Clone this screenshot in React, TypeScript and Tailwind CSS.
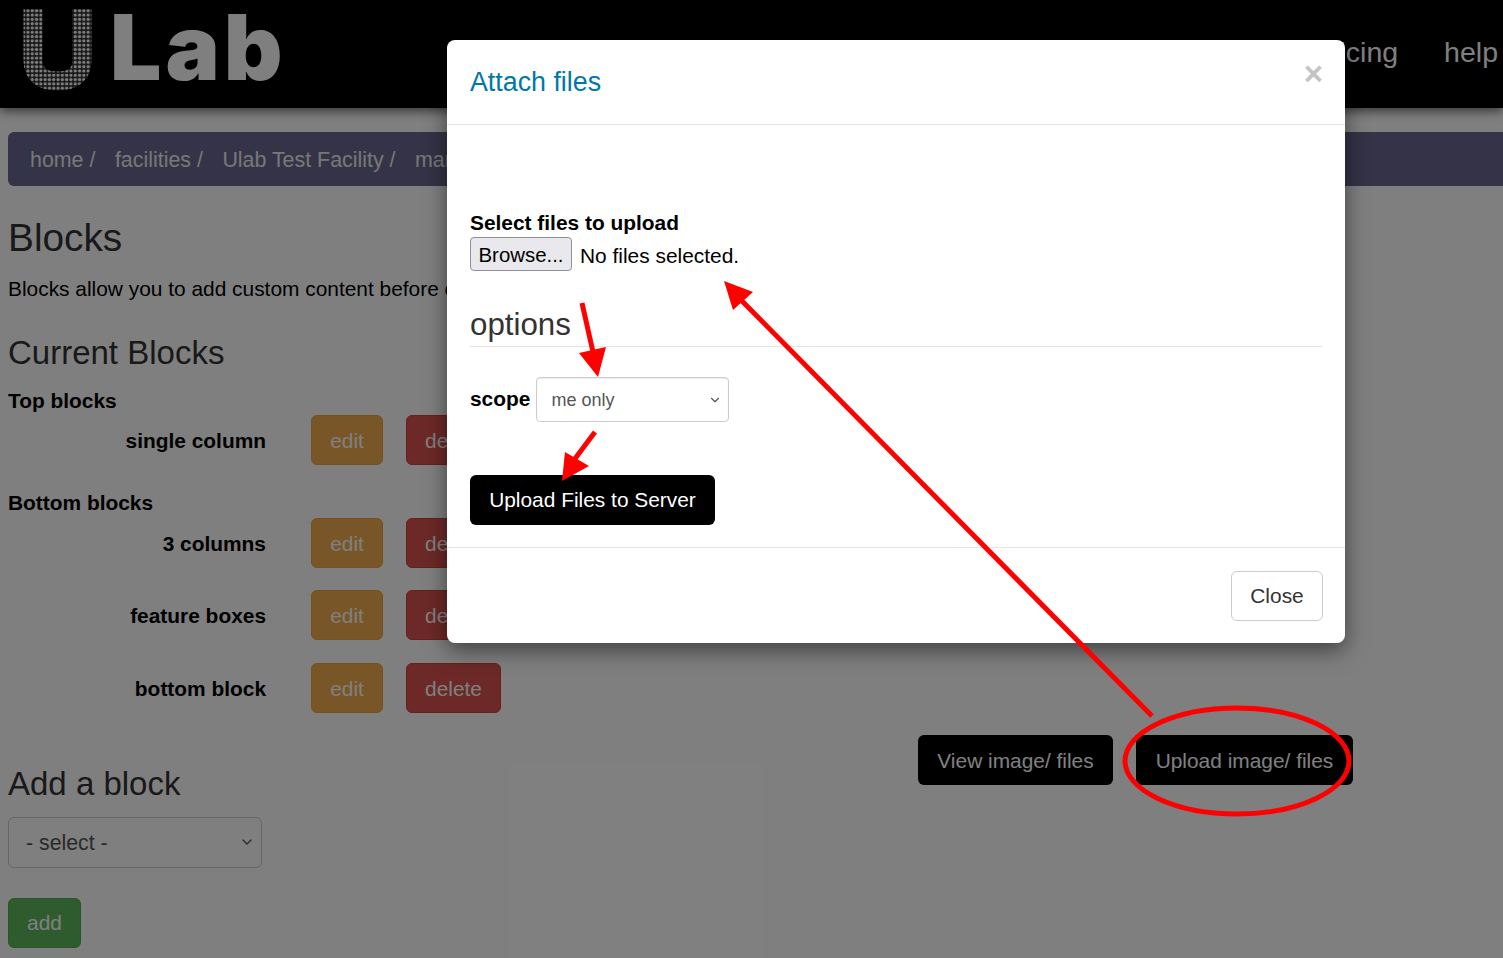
import { ChevronDown } from "lucide-react";

const topBlocks = ["single column"];
const bottomBlocks = [
  { name: "3 columns", cls: "mt-[1px]" },
  { name: "feature boxes", cls: "mt-[22px]" },
  { name: "bottom block", cls: "mt-[23px]" },
];

function BlockRow({ name, className = "" }: { name: string; className?: string }) {
  return (
    <div className={`flex items-center ${className}`}>
      <div className="w-[258px] text-right font-bold">{name}</div>
      <button className="ml-[45px] h-[50px] w-[72px] rounded-[6px] border border-[#eea236] bg-[#f0ad4e] text-white">edit</button>
      <button className="ml-[23px] h-[50px] w-[95px] rounded-[6px] border border-[#d43f3a] bg-[#d9534f] text-white">delete</button>
    </div>
  );
}

function Logo() {
  return (
    <div className="flex h-[108px] items-start overflow-hidden">
      <svg width="100" height="108" viewBox="0 0 100 108" className="shrink-0">
        <defs>
          <pattern id="dots" width="4.300" height="4.300" patternUnits="userSpaceOnUse">
            <rect width="4.300" height="4.300" fill="#333" />
            <circle cx="2.150" cy="2.150" r="1.600" fill="#fff" />
          </pattern>
        </defs>
        <path d="M33 9V60Q33 81 57.500 81Q82 81 82 60V9" fill="none" stroke="url(#dots)" strokeWidth="19" />
      </svg>
      <span className="ml-[10px] text-[91px] leading-[94px] font-black tracking-[4px] text-white [font-family:Inter,sans-serif]">Lab</span>
    </div>
  );
}

export default function App() {
  return (
    <div className="relative h-[958px] overflow-hidden bg-white text-[20.900px] leading-[29px] text-black [font-family:'Liberation_Sans',Arial,sans-serif]">
      <header className="flex h-[108px] items-start justify-between bg-black pr-[5px] shadow-[0_3px_10px_rgba(0,0,0,0.6)]">
        <Logo />
        <nav className="mt-[32px] flex gap-[46px] text-[28.500px] leading-[40px] text-white">
          <span>pricing</span>
          <span>help</span>
        </nav>
      </header>

      <main className="px-2">
        <div className="mt-6 flex h-[54px] w-[1600px] items-center gap-[19.500px] rounded-[6px] bg-[#68668e] px-[22px] pt-[2px] text-[21.400px] text-[#eee]">
          <span>home /</span>
          <span>facilities /</span>
          <span>Ulab Test Facility /</span>
          <span>manage blocks</span>
        </div>

        <h1 className="mt-[29px] text-[38.800px] leading-[46px] font-normal text-[#333]">Blocks</h1>
        <p className="mt-[13px]">Blocks allow you to add custom content before or after the main content of a page.</p>

        <h2 className="mt-[30px] text-[33px] leading-[40px] text-[#333]">Current Blocks</h2>
        <h3 className="mt-[13px] font-bold">Top blocks</h3>
        {topBlocks.map((name) => (
          <BlockRow key={name} name={name} />
        ))}
        <h3 className="mt-[23px] font-bold">Bottom blocks</h3>
        {bottomBlocks.map((b) => (
          <BlockRow key={b.name} name={b.name} className={b.cls} />
        ))}

        <div className="mt-[22px] flex justify-end gap-[23px] pr-[142px]">
          <button className="h-[50px] w-[195px] rounded-[6px] bg-black text-white">View image/ files</button>
          <button className="h-[50px] w-[217px] rounded-[6px] bg-black text-white">Upload image/ files</button>
        </div>

        <h2 className="mt-[-21px] text-[33px] leading-[40px] text-[#333]">Add a block</h2>
        <div className="relative mt-[13px] w-[254px]">
          <select className="h-[51px] w-full appearance-none rounded-[6px] border border-[#ccc] bg-white pl-[17px] pt-[2px] text-[21.300px] text-[#555]">
            <option>- select -</option>
          </select>
          <ChevronDown className="absolute right-[7px] top-[17px] h-4 w-4 text-[#555]" />
        </div>
        <button className="mt-[30px] h-[50px] w-[73px] rounded-[6px] border border-[#4cae4c] bg-[#5cb85c] pb-[2px] text-white">add</button>
      </main>

      {/* backdrop */}
      <div className="absolute inset-0 bg-black/50" />

      {/* modal */}
      <div className="absolute left-[447px] top-[40px] h-[603px] w-[898px] rounded-[8px] bg-white shadow-[0_7px_22px_rgba(0,0,0,0.5)]">
        <div className="relative h-[85px] border-b border-[#e5e5e5] px-[23px] pt-[25px]">
          <h4 className="text-[26.800px] leading-[34px] text-[#0077aa]">Attach files</h4>
          <span className="absolute right-[22px] top-[14px] text-[33px] leading-[40px] font-bold text-[#c4c4c4]">×</span>
        </div>

        <div className="h-[422px] px-[23px] pt-[83px]">
          <label className="block font-bold leading-[29px]">Select files to upload</label>
          <div className="flex items-center">
            <button className="h-[34px] w-[102px] rounded-[4px] border border-[#8f8f9d] bg-[#e9e9ed] pt-[3px] text-center text-[20.400px]">Browse...</button>
            <span className="ml-[8px] mt-[2px]">No files selected.</span>
          </div>
          <div className="mt-[33px] border-b border-[#e5e5e5] text-[31.300px] leading-[42px] text-[#333]">options</div>
          <div className="mt-[30px] flex items-center">
            <span className="mb-[3px] font-bold">scope</span>
            <div className="relative ml-[6px] w-[193px]">
              <select className="h-[45px] w-full appearance-none rounded-[4px] border border-[#ccc] bg-white pl-[14px] pt-[2px] text-[18px] text-[#555] shadow-[inset_0_1px_1px_rgba(0,0,0,0.08)]">
                <option>me only</option>
              </select>
              <ChevronDown className="absolute right-[7px] top-[16px] h-[14px] w-[14px] text-[#555]" />
            </div>
          </div>
          <button className="mt-[53px] block h-[50px] w-[245px] rounded-[6px] bg-black pb-[2px] text-white">Upload Files to Server</button>
        </div>

        <div className="flex justify-end border-t border-[#e5e5e5] px-[22px] pt-[23px]">
          <button className="h-[50px] w-[92px] rounded-[6px] border border-[#ccc] bg-white pb-[2px] text-[#333]">Close</button>
        </div>
      </div>

      {/* red annotations */}
      <svg className="pointer-events-none absolute left-0 top-0" width="1503" height="958" viewBox="0 0 1503 958">
        <ellipse cx="1237" cy="761" rx="112" ry="53" fill="none" stroke="#ff0000" strokeWidth="5" />
        <path d="M1152 716L742 301" stroke="#ff0000" strokeWidth="5" fill="none" />
        <polygon points="724,281 753,292 733,310" fill="#ff0000" />
        <path d="M582 303L593 352" stroke="#ff0000" strokeWidth="5" fill="none" />
        <polygon points="579,353 606,347 598,377" fill="#ff0000" />
        <path d="M595 432L574 460" stroke="#ff0000" strokeWidth="5" fill="none" />
        <polygon points="565,452 589,466 562,481" fill="#ff0000" />
      </svg>
    </div>
  );
}
